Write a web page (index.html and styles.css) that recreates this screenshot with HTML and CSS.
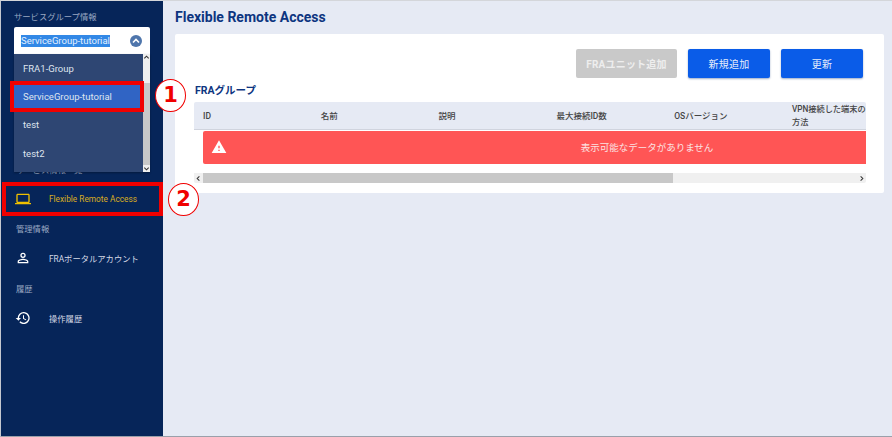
FILE: index.html
```html
<!DOCTYPE html>
<html lang="ja">
<head>
<meta charset="utf-8">
<title>Flexible Remote Access</title>
<link rel="stylesheet" href="styles.css">
</head>
<body>
<div class="app">
  <aside class="sidebar">
    <div class="group-label first">サービスグループ情報</div>
    <div class="select">
      <span class="select-value">ServiceGroup-tutorial</span>
      <span class="select-toggle">
        <svg viewBox="0 0 12 12" width="12" height="12"><path d="M3 7.500 6 4.500 9 7.500" fill="none" stroke="#fff" stroke-width="1.600"/></svg>
      </span>
    </div>
    <div class="group-label hidden-label">サービス情報一覧</div>
    <a class="nav-item active">
      <svg class="nav-icon" viewBox="0 0 24 24" width="16" height="16"><path d="M20 18c1.100 0 2-.9 2-2V6c0-1.100-.9-2-2-2H4c-1.100 0-2 .9-2 2v10c0 1.100.9 2 2 2H0v2h24v-2h-4zM4 6h16v10H4V6z" fill="#f0c000"/></svg>
      <span>Flexible Remote Access</span>
    </a>
    <div class="group-label">管理情報</div>
    <a class="nav-item">
      <svg class="nav-icon" viewBox="0 0 24 24" width="16" height="16"><path d="M12 5.900a2.100 2.100 0 1 1 0 4.200 2.100 2.100 0 0 1 0-4.200m0 9c2.970 0 6.100 1.460 6.100 2.100v1.100H5.900V17c0-.64 3.130-2.100 6.100-2.100M12 4a4 4 0 1 0 0 8 4 4 0 0 0 0-8zm0 9c-2.670 0-8 1.340-8 4v3h16v-3c0-2.660-5.330-4-8-4z" fill="#fff"/></svg>
      <span>FRAポータルアカウント</span>
    </a>
    <div class="group-label">履歴</div>
    <a class="nav-item">
      <svg class="nav-icon" viewBox="0 0 24 24" width="16" height="16"><path d="M13 3a9 9 0 0 0-9 9H1l3.890 3.890.07.140L9 12H6a7 7 0 1 1 2.050 4.950l-1.420 1.420A9 9 0 1 0 13 3zm-1 5v5l4.280 2.540.72-1.210-3.500-2.080V8H12z" fill="#fff"/></svg>
      <span>操作履歴</span>
    </a>

    <div class="dropdown">
      <ul class="options">
        <li>FRA1-Group</li>
        <li class="selected">ServiceGroup-tutorial</li>
        <li>test</li>
        <li>test2</li>
      </ul>
      <div class="dd-scroll">
        <svg viewBox="0 0 8 8" width="7" height="7"><path d="M1.500 5 4 2.500 6.500 5" fill="none" stroke="#333" stroke-width="1.200"/></svg>
        <div class="dd-track"><div class="dd-thumb"></div></div>
        <svg viewBox="0 0 8 8" width="7" height="7"><path d="M1.500 3 4 5.500 6.500 3" fill="none" stroke="#333" stroke-width="1.200"/></svg>
      </div>
    </div>
  </aside>

  <main class="main">
    <h1 class="page-title">Flexible Remote Access</h1>
    <section class="card">
      <div class="actions">
        <button class="btn disabled">FRAユニット追加</button>
        <button class="btn">新規追加</button>
        <button class="btn">更新</button>
      </div>
      <h2 class="section-title">FRAグループ</h2>
      <div class="table-wrap">
        <div class="thead">
          <div>ID</div>
          <div>名前</div>
          <div>説明</div>
          <div>最大接続ID数</div>
          <div>OSバージョン</div>
          <div class="th-narrow">VPN接続した端末の<br>方法</div>
        </div>
        <div class="tbody">
          <div class="alert">
            <svg class="alert-icon" viewBox="0 0 24 24" width="16" height="16"><path d="M1 21h22L12 2 1 21zm12-3h-2v-2h2v2zm0-4h-2v-4h2v4z" fill="#fff"/></svg>
            <span class="alert-text">表示可能なデータがありません</span>
          </div>
        </div>
        <div class="h-scroll">
          <span class="arrow"><svg viewBox="0 0 8 8" width="7" height="7"><path d="M5 1.500 2.500 4 5 6.500" fill="none" stroke="#333" stroke-width="1.200"/></svg></span>
          <div class="h-track"><div class="h-thumb"></div></div>
          <span class="arrow"><svg viewBox="0 0 8 8" width="7" height="7"><path d="M3 1.500 5.500 4 3 6.500" fill="none" stroke="#333" stroke-width="1.200"/></svg></span>
        </div>
      </div>
    </section>
  </main>

  <div class="mark mark-1"></div>
  <div class="mark mark-2"></div>
  <div class="badge badge-1">1</div>
  <div class="badge badge-2">2</div>
</div>
</body>
</html>
```

FILE: styles.css
```css
* { box-sizing: border-box; }
html, body { margin: 0; height: 100%; }
body {
  font-family: Roboto, "Noto Sans CJK JP", sans-serif;
  background: #e6eaf4;
  overflow: hidden;
}
.app {
  position: relative;
  display: flex;
  width: 892px;
  height: 437px;
  border-top: 1px solid #d4d6da;
  border-left: 1px solid #c4c8d0;
  border-bottom: 1px solid #9aa0aa;
}
.sidebar {
  position: relative;
  width: 162px;
  flex: none;
  background: #062559;
  display: flex;
  flex-direction: column;
  padding-top: 10px;
}
.group-label {
  font-size: 8.300px;
  line-height: 12px;
  color: #9aa8c2;
  padding-left: 15px;
  margin: 9px 0;
}
.group-label.first { margin: 0 0 4px 0; padding-left: 13px; }
.group-label.hidden-label { margin: 110px 0 8px; }
.select {
  margin-left: 13px;
  width: 136px;
  height: 27px;
  flex: none;
  background: #fff;
  border-radius: 2px 2px 0 0;
  display: flex;
  align-items: center;
  justify-content: space-between;
  padding: 0 8px 0 7px;
}
.select-value {
  font-size: 9.500px;
  line-height: 12px;
  background: #3288e6;
  color: #e4f0ff;
}
.select-toggle {
  width: 12px;
  height: 12px;
  border-radius: 50%;
  background: #4f76ac;
  display: flex;
}
.nav-item {
  display: flex;
  align-items: center;
  height: 30px;
  flex: none;
  padding: 0 0 2px 14px;
  font-size: 8.300px;
  color: #d5dae6;
}
.nav-item .nav-icon { flex: none; margin-right: 18px; }
.nav-item.active { color: #d9ae22; padding-bottom: 0; }
.dropdown {
  position: absolute;
  left: 13px;
  top: 53px;
  width: 136px;
  height: 118px;
  background: #2e4673;
  display: flex;
  box-shadow: 0 1px 2px rgba(0,0,0,.3);
}
.options {
  list-style: none;
  margin: 0;
  padding: 0;
  flex: 1;
  color: #dfe4ee;
  font-size: 9.500px;
}
.options li {
  height: 28.300px;
  display: flex;
  align-items: center;
  padding-left: 9px;
}
.options li.selected { background: #3064c4; }
.dd-scroll {
  width: 7px;
  background: #efefef;
  display: flex;
  flex-direction: column;
  flex: none;
}
.dd-track { flex: 1; padding-top: 22px; }
.dd-thumb { height: 82px; background: #c8c8c8; }
.main {
  flex: 1;
  padding: 8px 8px 0 12px;
  min-width: 0;
}
.page-title {
  margin: 0 0 8px;
  font-size: 14px;
  line-height: 17px;
  font-weight: 700;
  color: #0d3580;
}
.card {
  background: #fff;
  border-radius: 2px;
  height: 159px;
  padding: 15px 18px 0 19px;
}
.actions {
  display: flex;
  justify-content: flex-end;
  gap: 11px;
  padding-right: 3px;
}
.btn {
  width: 82px;
  height: 29px;
  border: 0;
  border-radius: 2px;
  background: #0a5ce8;
  color: #e8eefb;
  font: 10px Roboto, "Noto Sans CJK JP", sans-serif;
  letter-spacing: .2px;
  box-shadow: 0 1px 2px rgba(10,50,120,.4);
  padding: 0;
}
.btn.disabled {
  width: 101px;
  background: #c9c9c9;
  box-shadow: none;
  color: #eee;
  font-weight: 700;
}
.section-title {
  margin: 6px 0 4px 1px;
  font-size: 10.500px;
  line-height: 14px;
  font-weight: 700;
  color: #0d3580;
}
.table-wrap { overflow: hidden; border-radius: 2px; }
.thead {
  display: grid;
  grid-template-columns: repeat(6, 117.800px);
  height: 28px;
  padding: 1px 0 0 9px;
  background: #e6eaf4;
  border-bottom: 1px solid #d0d4de;
  align-items: center;
  font-size: 8.500px;
  line-height: 13px;
  font-weight: 500;
  color: #444;
}
.thead > div { white-space: nowrap; }
.thead > .th-narrow { font-size: 8.200px; }
.tbody { padding: 1px 0 9px 9px; }
.alert {
  width: 888px;
  height: 33px;
  background: #ff5555;
  border-radius: 2px 0 0 2px;
  display: flex;
  align-items: center;
  padding: 0 0 1px 8px;
}
.alert-icon { flex: none; }
.alert-text {
  flex: 1;
  text-align: center;
  font-size: 9.500px;
  color: #fbe3e3;
  padding-right: 24px;
}
.h-scroll {
  display: flex;
  height: 10px;
  background: #f0f0f0;
  align-items: center;
}
.arrow { width: 9px; flex: none; display: flex; justify-content: center; }
.h-track { flex: 1; height: 10px; }
.h-thumb { width: 470px; height: 10px; background: #c8c8c8; }
.mark {
  position: absolute;
  border: 4px solid #f00000;
}
.mark-1 { left: 9px; top: 80px; width: 134px; height: 31px; }
.mark-2 { left: 1px; top: 181px; width: 161px; height: 34px; }
.badge {
  position: absolute;
  width: 31px;
  height: 33px;
  border-radius: 50%;
  background: #fff;
  border: 1px solid #f00000;
  color: #f00000;
  font-family: "DejaVu Sans", sans-serif;
  font-size: 21px;
  font-weight: 700;
  line-height: 30px;
  text-align: center;
}
.badge-1 { left: 154px; top: 78px; }
.badge-2 { left: 167px; top: 182px; }
```
